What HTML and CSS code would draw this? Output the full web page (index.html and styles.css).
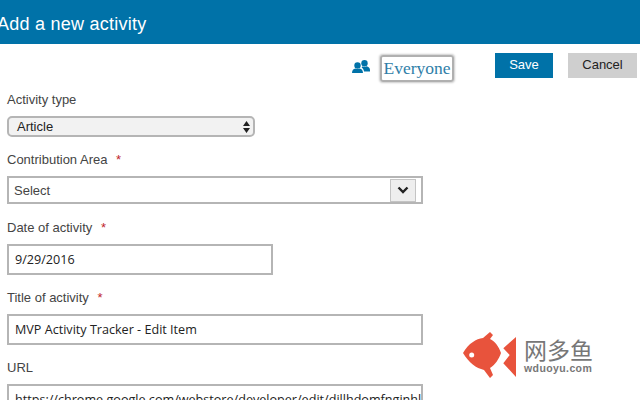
FILE: index.html
```html
<!DOCTYPE html>
<html lang="en">
<head>
    <meta charset="UTF-8">
    <title>Add a new activity</title>
    <link rel="stylesheet" href="styles.css">
</head>
<body>
    <div class="header"><h1>Add a new activity</h1></div>

    <div class="toolbar">
        <svg class="people" width="18" height="13" viewBox="0 0 18 13">
            <circle cx="5.500" cy="5.500" r="3.200"/>
            <path d="M0 13c0-2.800 1.500-4.300 3.300-4.500 1.300.8 3.100.8 4.400 0 1.800.2 3.300 1.700 3.300 4.500z"/>
            <circle cx="12.500" cy="3.200" r="3.200"/>
            <path d="M12 11.500c-.2-1.900-1-3-2.400-4l1-1.200c1.200.7 2.800.7 4 0 1.800.3 3.400 1.500 3.400 3.600v1.600z"/>
        </svg>
        <div class="audience">Everyone</div>
        <button class="btn btn-save">Save</button>
        <button class="btn btn-cancel">Cancel</button>
    </div>

    <form class="form">
        <label class="first">Activity type</label>
        <div class="native-select">
            <span>Article</span>
            <svg width="7" height="12" viewBox="0 0 7 12"><path d="M3.500 0l3.500 5H0zM0 7h7l-3.500 5z"/></svg>
        </div>

        <label class="above-combo">Contribution Area <span class="req">*</span></label>
        <div class="combo">
            <span>Select</span>
            <div class="combo-btn">
                <svg width="12" height="8" viewBox="0 0 12 8"><path d="M1.500 1.500L6 6l4.500-4.500" fill="none" stroke="#222" stroke-width="2.400"/></svg>
            </div>
        </div>

        <label class="above-input">Date of activity <span class="req">*</span></label>
        <div class="text-input short">9/29/2016</div>

        <label class="above-input">Title of activity <span class="req">*</span></label>
        <div class="text-input">MVP Activity Tracker - Edit Item</div>

        <label class="above-input">URL</label>
        <div class="text-input">https://chrome.google.com/webstore/developer/edit/dillhdomfnginhl</div>
    </form>

    <div class="watermark">
        <svg width="54" height="47" viewBox="0 0 54 47">
            <path fill="#e8533c" d="M0 21C6 11 13 7 20 6L27 0l3 3-3 4c5 2 9 8 11 14-2 6-6 12-11 15l3 7-3 3-6-8C13 36 6 31 0 21z"/>
            <path fill="#e8533c" d="M53 5v40L40.300 31.300 46.700 23l-6.400-6.700z"/>
            <circle cx="8.700" cy="23" r="2.500" fill="#fff"/>
        </svg>
        <div class="wm-text">
            <div class="wm-cn">网多鱼</div>
            <div class="wm-en">wduoyu.com</div>
        </div>
    </div>
</body>
</html>
```

FILE: styles.css
```css
html, body {
    margin: 0;
    height: 400px;
    overflow: hidden;
}
body {
    position: relative;
    font-family: "Liberation Sans", Arial, sans-serif;
    font-size: 13px;
    color: #444;
    background: white;
}
.header {
    box-sizing: border-box;
    height: 44px;
    padding-top: 4px;
    background-color: #0072a8;
    display: flex;
    align-items: center;
}
h1 {
    margin: 0 0 0 -3px;
    font-size: 18px;
    font-weight: normal;
    color: white;
    letter-spacing: 0.25px;
}
.toolbar {
    display: flex;
    align-items: flex-start;
    padding: 9px 3px 0 352px;
    height: 29px;
}
.people {
    fill: #0072a8;
    margin-top: 7px;
}
.audience {
    box-sizing: border-box;
    width: 74px;
    height: 27px;
    margin: 2px 0 0 10px;
    border: 2px solid #b0b0b0;
    border-radius: 3px;
    box-shadow: 0 0 2px 1px #ccc;
    font-family: "Liberation Serif", serif;
    font-size: 17.500px;
    line-height: 23px;
    color: #2f7ea8;
    text-align: center;
    white-space: nowrap;
}
.btn {
    height: 25px;
    border: none;
    padding: 0 0 3px;
    font-family: "Liberation Sans", Arial, sans-serif;
    font-size: 13px;
}
.btn-save {
    width: 58px;
    margin-left: 41px;
    background-color: #0072a8;
    color: white;
}
.btn-cancel {
    width: 69px;
    margin-left: 15px;
    background-color: #cfcfcf;
    color: #222;
}
.form {
    padding: 0 0 0 7px;
}
label {
    display: block;
    height: 16px;
    line-height: 16px;
    margin: 14px 0 10px;
}
label.first {
    margin: 10px 0 8px;
}
label.above-combo {
    margin: 15px 0 8px;
}
label.above-input {
    margin-bottom: 8px;
}
.req {
    color: #c0252b;
    margin-left: 5px;
}
.native-select {
    box-sizing: border-box;
    width: 248px;
    height: 21px;
    border: 2px solid #b5b5b5;
    border-radius: 5px;
    background: #f2f2f2;
    display: flex;
    align-items: center;
    justify-content: space-between;
    padding: 0 3px 0 8px;
    color: #222;
}
.native-select svg {
    fill: #222;
}
.combo {
    box-sizing: border-box;
    width: 416px;
    height: 28px;
    margin-bottom: 16px;
    border: 2px solid #b5b5b5;
    display: flex;
    align-items: center;
    justify-content: space-between;
    padding: 0 5px;
}
.combo + label {
    margin-top: 0;
}
.combo-btn {
    width: 26px;
    height: 23px;
    background: #eee;
    border: 1px solid #c4c4c4;
    box-sizing: border-box;
    display: flex;
    align-items: center;
    justify-content: center;
}
.text-input {
    box-sizing: border-box;
    width: 416px;
    height: 31px;
    margin-bottom: 15px;
    border: 2px solid #b5b5b5;
    padding: 0 6px;
    font-family: "Open Sans", sans-serif;
    font-size: 12.600px;
    line-height: 28px;
    color: #222;
    white-space: nowrap;
    overflow: hidden;
}
.text-input + label {
    margin-top: 0;
}
.text-input.short {
    width: 266px;
}
.watermark {
    position: absolute;
    left: 463px;
    top: 332px;
    display: flex;
    gap: 7px;
}
.wm-text {
    color: #777;
    margin-top: 4px;
}
.wm-cn {
    font-family: "Noto Sans CJK SC", sans-serif;
    font-size: 23px;
    line-height: 26px;
}
.wm-en {
    font-size: 10.500px;
    font-weight: bold;
    letter-spacing: 0.4px;
    line-height: 13px;
}
```
